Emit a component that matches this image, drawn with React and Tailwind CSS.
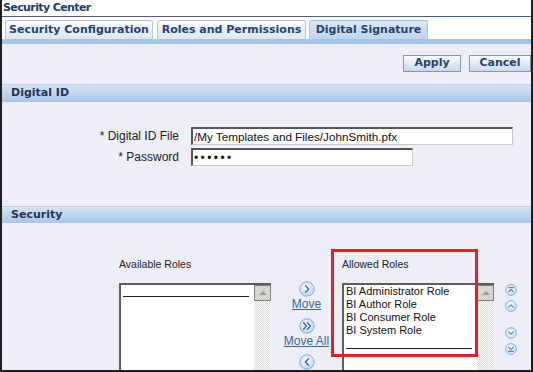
import React from "react";

function MoveIcon({ id, kind }) {
  const paths = {
    right: "M6.6 4.8 L9.6 8 L6.6 11.2",
    all: "M4.6 4.8 L7.4 8 L4.6 11.2 M8.4 4.8 L11.2 8 L8.4 11.2",
    left: "M9.4 4.8 L6.4 8 L9.4 11.2",
  };
  return (
    <svg width="16" height="16" viewBox="0 0 16 16" className="block">
      <defs>
        <radialGradient id={id} cx="45%" cy="40%" r="65%">
          <stop offset="0" stopColor="#ffffff" />
          <stop offset="1" stopColor="#b9d1ee" />
        </radialGradient>
      </defs>
      <circle cx="8" cy="8" r="7.2" fill={`url(#${id})`} stroke="#86acd9" strokeWidth="1" />
      <path d={paths[kind]} fill="none" stroke="#2f6db5" strokeWidth="1.5" strokeLinecap="round" strokeLinejoin="round" />
    </svg>
  );
}

function OrderIcon({ id, kind }) {
  const paths = {
    top: "M3.6 3.6 H8.4 M3.6 7.8 L6 5.4 L8.4 7.8",
    up: "M3.6 7.2 L6 4.8 L8.4 7.2",
    down: "M3.6 4.8 L6 7.2 L8.4 4.8",
    bottom: "M3.6 4.2 L6 6.6 L8.4 4.2 M3.6 8.4 H8.4",
  };
  return (
    <svg width="12" height="12" viewBox="0 0 12 12" className="block">
      <defs>
        <radialGradient id={id} cx="45%" cy="40%" r="65%">
          <stop offset="0" stopColor="#ffffff" />
          <stop offset="1" stopColor="#c3d8f1" />
        </radialGradient>
      </defs>
      <circle cx="6" cy="6" r="5.4" fill={`url(#${id})`} stroke="#86acd9" strokeWidth="0.9" />
      <path d={paths[kind]} fill="none" stroke="#4b86c8" strokeWidth="1.1" strokeLinecap="round" strokeLinejoin="round" />
    </svg>
  );
}

function ListBox({ items }) {
  return (
    <div className="w-[152px] h-[100px] flex border-t-2 border-l-2 border-[#5e5e5e] bg-white">
      <div className="flex-1 flex flex-col pl-[2px] font-['Liberation_Sans',sans-serif] text-[11px] leading-[13px] text-[#111]">
        {items.map((it) => (
          <div key={it} className="h-[13px] whitespace-nowrap">
            {it}
          </div>
        ))}
        <div className="w-[126px] h-[12px] border-b border-[#222]" />
      </div>
      <div className="w-[17px] flex flex-col">
        <div className="h-[16px] border border-[#7d7d7d] bg-[#d8d5d0] flex items-center justify-center">
          <div className="w-0 h-0 border-x-[4px] border-x-transparent border-b-[4px] border-b-[#9c9c9c]" />
        </div>
        <div className="flex-1 bg-[image:repeating-conic-gradient(#d6d6d6_0_25%,#ffffff_0_50%)] bg-[length:2px_2px]" />
      </div>
    </div>
  );
}

export default function App() {
  return (
    <div className="relative w-[533px] h-[372px] overflow-hidden bg-white flex flex-col border-x-2 border-b-2 border-[#1e1e1e] font-['Liberation_Sans',sans-serif]">
      {/* Title */}
      <div className="h-[17px] shrink-0 border-b border-[#4b5b7a] pl-[1px] font-['DejaVu_Sans',sans-serif] font-bold text-[11px] leading-[16px] tracking-[-0.6px] text-[#213c66]">
        Security Center
      </div>

      {/* Tabs */}
      <div className="h-[22px] shrink-0 flex items-end pl-[3px] gap-[4px] font-['DejaVu_Sans',sans-serif] font-bold text-[11px] text-[#26436a]">
        <div className="w-[148px] h-[19px] rounded-t-[3px] border border-b-0 border-[#b5c7dd] bg-gradient-to-b from-[#f7f9fc] to-[#dde6f1] flex items-center justify-center">
          Security Configuration
        </div>
        <div className="w-[149px] h-[19px] rounded-t-[3px] border border-b-0 border-[#b5c7dd] bg-gradient-to-b from-[#f7f9fc] to-[#dde6f1] flex items-center justify-center">
          Roles and Permissions
        </div>
        <div className="ml-[-1px] w-[119px] h-[19px] rounded-t-[3px] border border-b-0 border-[#a9c2e0] bg-gradient-to-b from-[#dbe8f6] to-[#bfd5ee] flex items-center justify-center">
          Digital Signature
        </div>
      </div>
      <div className="h-[5px] shrink-0 bg-[#a5c4e6]" />

      {/* Content */}
      <div className="flex-1 bg-[#eeeef8] flex flex-col">
        <div className="pt-[11px] flex justify-end gap-[8px] font-['DejaVu_Sans',sans-serif] font-bold text-[11px] text-[#26436a]">
          <div className="w-[58px] h-[17px] border border-[#8596ad] bg-gradient-to-b from-[#fbfcfe] to-[#c9d9ec] flex items-center justify-center">
            Apply
          </div>
          <div className="w-[62px] h-[17px] border border-[#8596ad] bg-gradient-to-b from-[#fbfcfe] to-[#c9d9ec] flex items-center justify-center">
            Cancel
          </div>
        </div>

        <div className="mt-[12px] h-[18px] border-t border-[#bcd0e6] bg-gradient-to-b from-[#d6e4f4] to-[#a9c6e7] pl-[9px] flex items-center font-['DejaVu_Sans',sans-serif] font-bold text-[11px] text-[#1f3553]">
          Digital ID
        </div>

        <div className="mt-[25px] flex flex-col gap-[3px] text-[12px] text-[#222]">
          <div className="flex items-center gap-[12px]">
            <div className="w-[177px] text-right">* Digital ID File</div>
            <div className="w-[322px] h-[18px] bg-white border-t-2 border-l-2 border-[#555] border-b border-r border-b-[#c8c8c8] border-r-[#c8c8c8] pl-[1px] flex items-center whitespace-nowrap overflow-hidden text-[11.7px] text-[#111]">
              /My Templates and Files/JohnSmith.pfx
            </div>
          </div>
          <div className="flex items-center gap-[12px]">
            <div className="w-[177px] text-right">* Password</div>
            <div className="w-[222px] h-[18px] bg-white border-t-2 border-l-2 border-[#555] border-b border-r border-b-[#c8c8c8] border-r-[#c8c8c8] pl-[1px] flex items-center text-[12px] tracking-[2.4px] text-[#111]">
              ••••••
            </div>
          </div>
        </div>

        <div className="mt-[40px] h-[17px] border-t border-[#bcd0e6] bg-gradient-to-b from-[#d6e4f4] to-[#a9c6e7] pl-[9px] flex items-center font-['DejaVu_Sans',sans-serif] font-bold text-[11px] text-[#1f3553]">
          Security
        </div>

        <div className="mt-[35px] flex pl-[117px]">
          <div className="w-[152px] flex flex-col">
            <div className="h-[13px] text-[10.5px] leading-[13px] text-[#222]">Available Roles</div>
            <div className="mt-[12px]">
              <ListBox items={[]} />
            </div>
          </div>

          <div className="w-[71px] pt-[23px] flex flex-col items-center text-[12px] leading-[13px] text-[#33699b]">
            <MoveIcon id="m1" kind="right" />
            <a className="underline mt-[1px]">Move</a>
            <div className="mt-[7px]">
              <MoveIcon id="m2" kind="all" />
            </div>
            <a className="underline mt-[1px] whitespace-nowrap">Move All</a>
            <div className="mt-[6px]">
              <MoveIcon id="m3" kind="left" />
            </div>
          </div>

          <div className="w-[152px] flex flex-col">
            <div className="h-[13px] text-[10.5px] leading-[13px] text-[#222]">Allowed Roles</div>
            <div className="mt-[12px]">
              <ListBox
                items={[
                  "BI Administrator Role",
                  "BI Author Role",
                  "BI Consumer Role",
                  "BI System Role",
                ]}
              />
            </div>
          </div>

          <div className="ml-[11px] pt-[26px] flex flex-col">
            <OrderIcon id="o1" kind="top" />
            <div className="mt-[4px]">
              <OrderIcon id="o2" kind="up" />
            </div>
            <div className="mt-[15px]">
              <OrderIcon id="o3" kind="down" />
            </div>
            <div className="mt-[4px]">
              <OrderIcon id="o4" kind="bottom" />
            </div>
          </div>
        </div>
      </div>

      {/* Annotation highlight */}
      <div className="absolute left-[329px] top-[249px] w-[147px] h-[108px] border-[3px] border-[#ea1c24] pointer-events-none" />
    </div>
  );
}
